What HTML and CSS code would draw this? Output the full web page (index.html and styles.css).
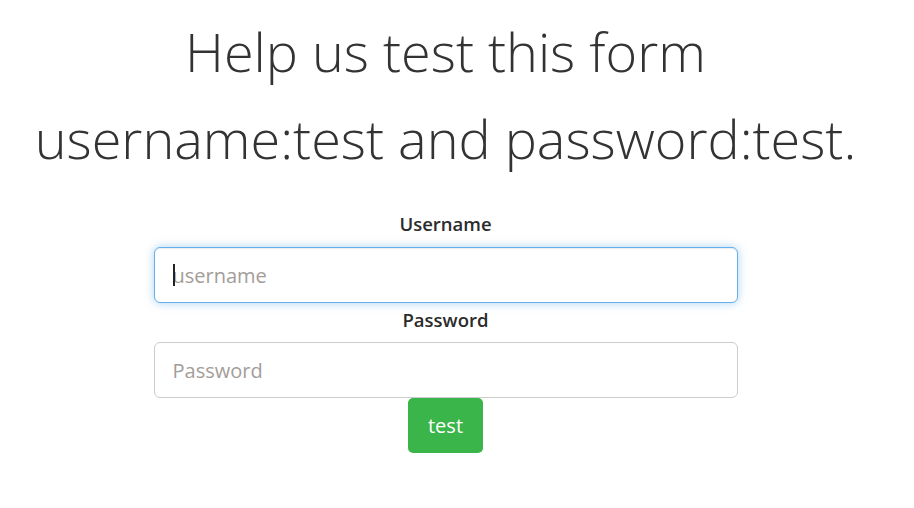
FILE: index.html
```html
<!DOCTYPE html>
<html lang="en">
<head>
<meta charset="utf-8">
<title>Help us test this form</title>
<link rel="stylesheet" href="styles.css">
</head>
<body>
<main class="page">
  <h1 class="title">Help us test this form<br>username:test and password:test.</h1>
  <form class="login">
    <label class="label" for="u">Username</label>
    <div class="field-wrap">
      <input class="field field--focus" id="u" type="text" placeholder="username">
      <span class="caret"></span>
    </div>
    <label class="label" for="p">Password</label>
    <input class="field" id="p" type="password" placeholder="Password">
    <button class="btn" type="button">test</button>
  </form>
</main>
</body>
</html>
```
FILE: styles.css
```css
* { box-sizing: border-box; }
html, body { margin: 0; background: #fff; }
body {
  font-family: "Open Sans", "Noto Sans", sans-serif;
  color: #333;
}
.page {
  width: 891px;
  display: flex;
  flex-direction: column;
  align-items: center;
}
.title {
  margin: 8px 0 0;
  font-weight: 300;
  font-size: 54px;
  line-height: 87px;
  text-align: center;
  color: #333;
}
.login {
  margin-top: 29px;
  width: 584px;
  display: flex;
  flex-direction: column;
  align-items: center;
}
.label {
  font-size: 18.5px;
  font-weight: 600;
  line-height: 26px;
  color: #2b2b2b;
  margin: 4px 0 9px;
}
.login > .label:first-child { margin-top: 0; margin-bottom: 10px; }
.field-wrap {
  position: relative;
  width: 584px;
}
.caret {
  position: absolute;
  left: 19px;
  top: 17px;
  width: 2px;
  height: 22px;
  background: #222;
}
.field {
  display: block;
  width: 584px;
  height: 56px;
  border: 1px solid #ccc;
  border-radius: 6px;
  padding: 0 18px;
  font-family: inherit;
  font-size: 20px;
  color: #555;
  outline: none;
}
.field::placeholder { color: #a39d99; }
.field--focus {
  border-color: #66afe9;
  box-shadow: inset 0 1px 1px rgba(0,0,0,.075), 0 0 10px rgba(102,175,233,.55);
}
.btn {
  width: 75px;
  height: 55px;
  background: #39b54a;
  border: 0;
  border-radius: 5px;
  color: #fff;
  font-family: inherit;
  font-size: 20px;
}
```
